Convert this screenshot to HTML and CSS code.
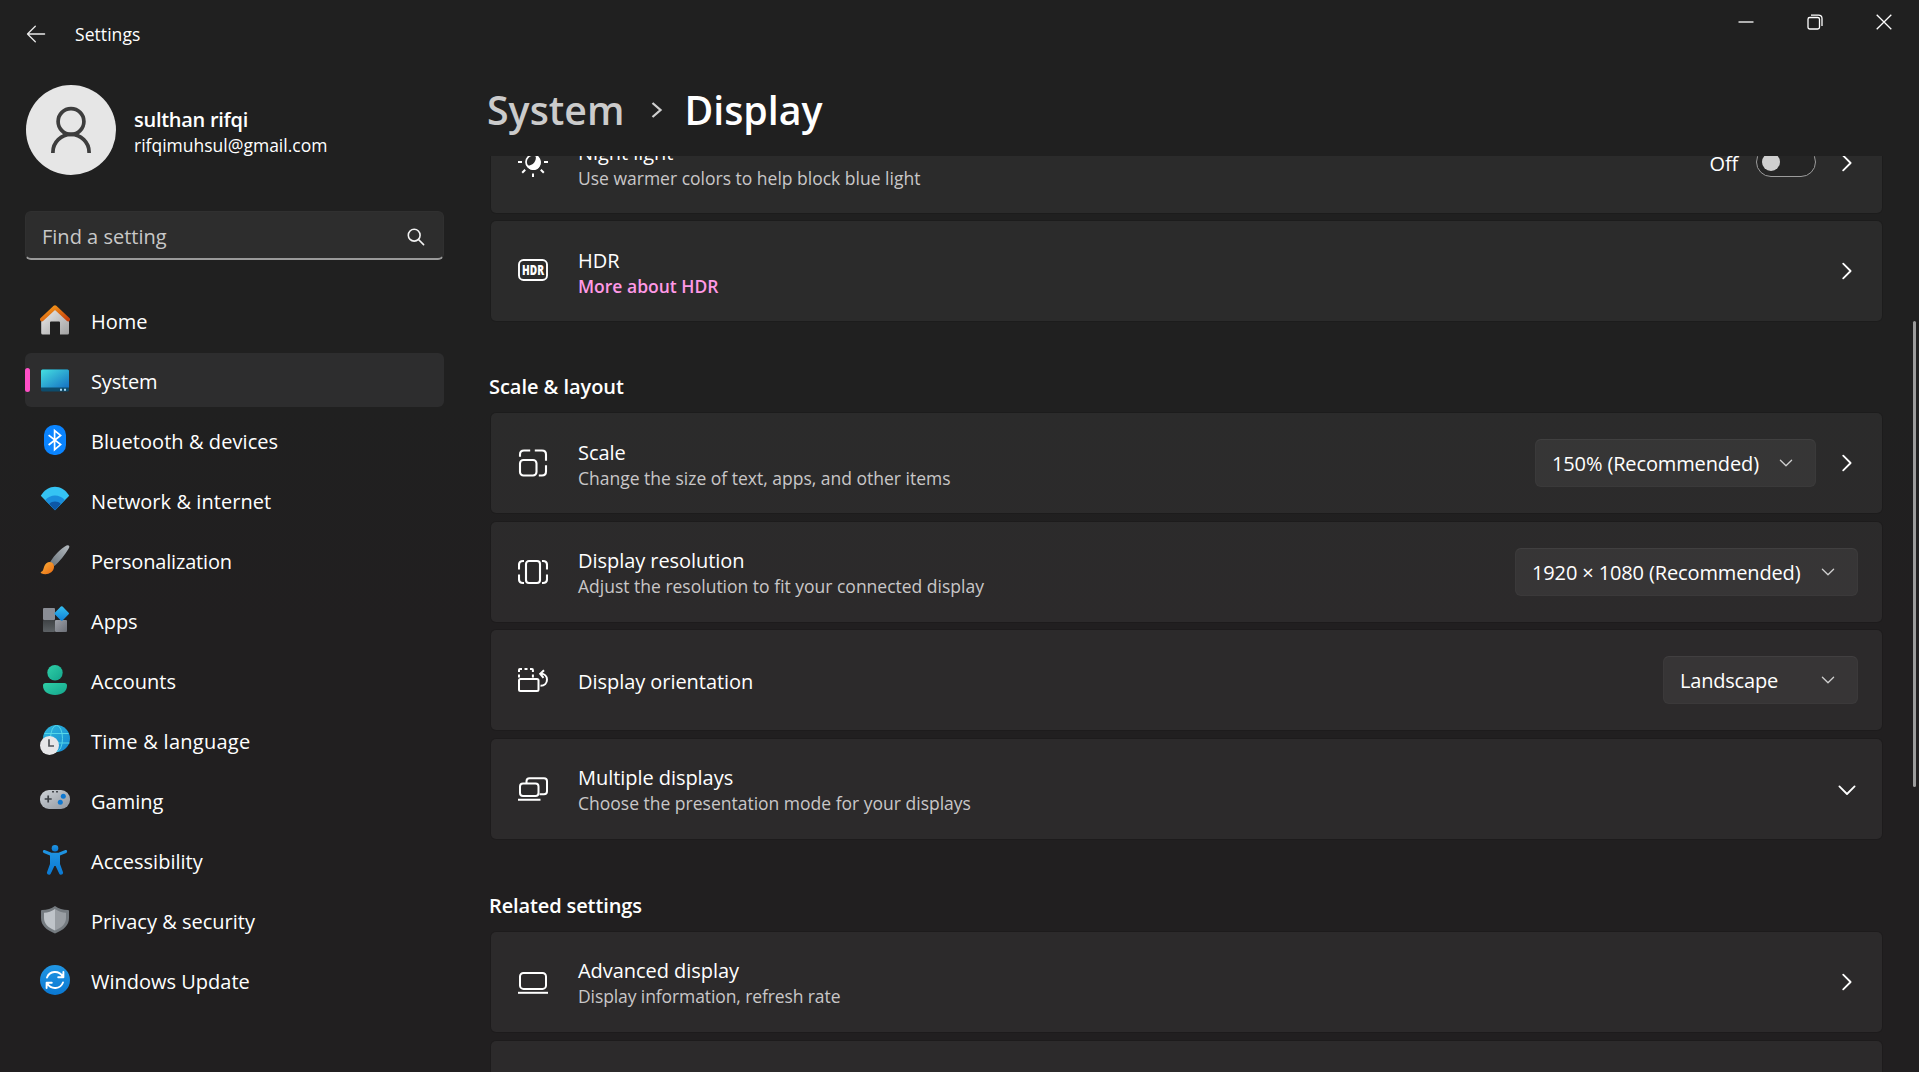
FILE: index.html
```
<!DOCTYPE html>
<html lang="en">
<head>
<meta charset="utf-8">
<title>Settings</title>
<link rel="stylesheet" href="styles.css">
</head>
<body>
<svg class="defs" width="0" height="0" aria-hidden="true">
  <defs>
    <symbol id="chev-right" viewBox="0 0 22 22"><path d="M7.2 3.6 14.6 11l-7.4 7.4" fill="none" stroke="currentColor" stroke-width="1.8" stroke-linecap="round" stroke-linejoin="round"/></symbol>
    <symbol id="chev-down" viewBox="0 0 22 22"><path d="M3.4 8.4 11 16l7.6-7.6" fill="none" stroke="currentColor" stroke-width="1.8" stroke-linecap="round" stroke-linejoin="round"/></symbol>
    <symbol id="chev-small" viewBox="0 0 14 14"><path d="M1.4 4.2 7 9.8l5.6-5.6" fill="none" stroke="currentColor" stroke-width="1.3" stroke-linecap="round" stroke-linejoin="round"/></symbol>
    <linearGradient id="g-roof" x1="0" y1="0" x2="1" y2="1"><stop offset="0" stop-color="#f9a11b"/><stop offset="1" stop-color="#c8400c"/></linearGradient>
    <linearGradient id="g-wall" x1="0" y1="0" x2="1" y2="1"><stop offset="0" stop-color="#ececec"/><stop offset="1" stop-color="#a2a2a2"/></linearGradient>
    <linearGradient id="g-screen" x1="0" y1="0" x2="1" y2="1"><stop offset="0" stop-color="#45dfe0"/><stop offset="1" stop-color="#1571c4"/></linearGradient>
    <linearGradient id="g-handle" x1="1" y1="0" x2="0" y2="1"><stop offset="0" stop-color="#b4babf"/><stop offset="1" stop-color="#69737b"/></linearGradient>
    <linearGradient id="g-brush" x1="0" y1="0" x2="1" y2="1"><stop offset="0" stop-color="#fbb13a"/><stop offset="1" stop-color="#e96a12"/></linearGradient>
    <linearGradient id="g-blue" x1="0" y1="0" x2="1" y2="1"><stop offset="0" stop-color="#35c1f1"/><stop offset="1" stop-color="#0f7fd7"/></linearGradient>
    <linearGradient id="g-globe" x1="0" y1="0" x2="1" y2="1"><stop offset="0" stop-color="#2fb9dd"/><stop offset="1" stop-color="#1487d0"/></linearGradient>
    <linearGradient id="g-deep" x1="0" y1="0" x2="0" y2="1"><stop offset="0" stop-color="#2196e3"/><stop offset="1" stop-color="#0a78d2"/></linearGradient>
    <linearGradient id="g-teal" x1="0" y1="0" x2="1" y2="1"><stop offset="0" stop-color="#2fd0a8"/><stop offset="1" stop-color="#14a58c"/></linearGradient>
    <linearGradient id="g-pad" x1="0" y1="0" x2="1" y2="1"><stop offset="0" stop-color="#cfd3d8"/><stop offset="1" stop-color="#8f959d"/></linearGradient>
    <linearGradient id="g-tile" x1="0" y1="0" x2="1" y2="1"><stop offset="0" stop-color="#9da0a8"/><stop offset="1" stop-color="#6c6f77"/></linearGradient>
    <linearGradient id="g-dark" x1="0" y1="0" x2="0" y2="1"><stop offset="0" stop-color="#3f4245"/><stop offset="1" stop-color="#5c6064"/></linearGradient>
  </defs>
</svg>

<div class="window">
  <aside class="sidebar">
    <header class="titlebar">
      <svg class="back" width="20" height="18" viewBox="0 0 20 18"><path d="M18.6 9H1.6M9.3 1.2 1.5 9l7.8 7.8" fill="none" stroke="#e8e8e8" stroke-width="1.3" stroke-linecap="round" stroke-linejoin="round"/></svg>
      <span class="caption">Settings</span>
    </header>

    <div class="account">
      <div class="avatar"><svg width="42" height="48" viewBox="0 0 42 48" fill="none" stroke="#3d3d3d" stroke-width="3.7"><circle cx="21" cy="15.5" r="12.9"/><path d="M2.9 47v-.8C2.9 36.400 11 28.400 21 28.400s18.100 8 18.100 17.800v.8"/></svg></div>
      <div class="who"><div class="name">sulthan rifqi</div><div class="mail">rifqimuhsul@gmail.com</div></div>
    </div>

    <div class="search"><span>Find a setting</span>
      <svg width="18" height="18" viewBox="0 0 18 18" fill="none" stroke="#f2f2f2" stroke-width="1.6" stroke-linecap="round"><circle cx="7.200" cy="7.200" r="5.900"/><path d="M11.500 11.500 16.600 16.600"/></svg>
    </div>

    <nav class="nav">
      <a class="item"><svg class="ico" viewBox="0 0 30 30"><path d="M15 4 1.200 16.500V28q0 1.500 1.500 1.500H10V17.500q0-1 1-1h8q1 0 1 1v12h7.500q1.500 0 1.500-1.500V16.500z" fill="url(#g-wall)"/><path d="M2 14.400 15 2.300l13 12.100" fill="none" stroke="url(#g-roof)" stroke-width="4" stroke-linecap="round" stroke-linejoin="round"/></svg><span>Home</span></a>
      <a class="item active"><svg class="ico" viewBox="0 0 30 30"><rect x="1" y="4.500" width="28" height="22" rx="1.500" fill="#0d4c6c"/><path d="M2.500 4.500h25q1.500 0 1.500 1.500v16.500H1V6q0-1.500 1.500-1.500z" fill="url(#g-screen)"/><path d="M20 23.700h2v2h-2zM24 23.700h2v2h-2z" fill="#a9d8f2"/></svg><span class="tight">System</span></a>
      <a class="item"><svg class="ico" viewBox="0 0 30 30"><rect x="4" y="0" width="22" height="30" rx="10" fill="#0a84ff"/><path d="M8.600 10.200 20.600 19.600 14.600 24.600V5.600l6 4.800L8.600 20" fill="none" stroke="#fff" stroke-width="1.700"/></svg><span class="wide">Bluetooth &amp; devices</span></a>
      <a class="item"><svg class="ico" viewBox="0 0 30 30"><path d="M.8 11.200C8-.8 22-.8 29.200 11.200L15 25.800z" transform="translate(0 -.5)" fill="#35c3f3"/><path d="M5.200 15.100C10.500 9 19.500 9 24.800 15.100L15 25.300z" fill="#1a8ddc"/><path d="M9.200 19C12.500 15.800 17.500 15.800 20.800 19L15 25.300z" fill="#0d57a6"/></svg><span class="wide">Network &amp; internet</span></a>
      <a class="item"><svg class="ico" viewBox="0 0 30 30"><path d="M10.200 17C15 9.500 21 3.500 26.500.6q2-.8 2.700.5.400 1-.5 2.500C25 10 19.500 16.500 14.500 21z" fill="url(#g-handle)"/><path d="M12.700 18.300c2.300 2.500 1.600 6.500-1.500 9-3 2.200-7.200 2.300-10 .9-.8-.5-.5-1.100.2-1.500 2-1 1.800-2.500 2.700-5 1.300-3.700 5.600-6.300 8.600-3.400z" fill="url(#g-brush)"/></svg><span class="tight">Personalization</span></a>
      <a class="item"><svg class="ico" viewBox="0 0 30 30"><rect x="3" y="3" width="12" height="12" rx="1" fill="#8a8d95"/><rect x="3" y="15" width="12" height="12" rx="1" fill="url(#g-dark)"/><rect x="15" y="15" width="12" height="12" rx="1" fill="url(#g-tile)"/><rect x="16.200" y="3" width="11" height="11" rx="1.200" transform="rotate(45 21.700 8.500)" fill="url(#g-blue)"/></svg><span>Apps</span></a>
      <a class="item"><svg class="ico" viewBox="0 0 30 30"><circle cx="15" cy="7.700" r="7.700" fill="url(#g-teal)"/><path d="M5.700 18h18.600Q27 18 27 20.500C27 26.500 22 30 15 30S3 26.500 3 20.500Q3 18 5.700 18z" fill="url(#g-teal)"/></svg><span>Accounts</span></a>
      <a class="item"><svg class="ico" viewBox="0 0 30 30"><circle cx="16.500" cy="13.500" r="13.500" fill="url(#g-globe)"/><g fill="none" stroke="#55d6e8" stroke-width="1"><ellipse cx="16.500" cy="13.500" rx="6" ry="13.200"/><path d="M4.500 8.500h24M3.500 18h26"/></g><circle cx="9.500" cy="20.500" r="9.500" fill="#e6e6e8"/><path d="M9 14.300v6.700h5" fill="none" stroke="#505358" stroke-width="1.700"/></svg><span class="wider">Time &amp; language</span></a>
      <a class="item"><svg class="ico" viewBox="0 0 30 30"><rect x="0" y="5" width="30" height="19" rx="9" fill="url(#g-pad)"/><path d="M8.200 10.500v7M4.700 14h7" stroke="#3b3f44" stroke-width="1.700"/><circle cx="23.300" cy="11.300" r="2.500" fill="#0f78d1"/><circle cx="20.300" cy="17.300" r="2.500" fill="#0f78d1"/><path d="M12 6h2v1.500h-2zM16 6h2v1.500h-2z" fill="#44474c"/></svg><span>Gaming</span></a>
      <a class="item"><svg class="ico" viewBox="0 0 30 30"><circle cx="15" cy="3.300" r="3.300" fill="url(#g-deep)"/><path d="M4.700 5 11.500 7.800h7L25.300 5c1.800-.5 2.600 2 .9 2.900L20 10.500v8.500l3 8.300c.6 2.200-2.700 3.600-3.700 1.400L15.600 21h-1.200l-3.700 7.700c-1 2.200-4.300.8-3.700-1.400l3-8.300v-8.500L3.800 7.900C2.100 7 2.900 4.500 4.700 5z" fill="url(#g-deep)"/></svg><span>Accessibility</span></a>
      <a class="item"><svg class="ico" viewBox="0 0 30 30"><path d="M15 .9c3.500 2.600 8 4 13 4.200q1 .1 1 1V13c0 7-5 12-14 15.500C6 25 1 20 1 13V6.100q0-.9 1-1C7 4.900 11.500 3.500 15 .9z" fill="#757b80"/><path d="M15 3.900c-3.300 2.300-7 3.500-11 3.900V13c0 5.500 3.700 9.500 11 12.500z" fill="#bfc4c9"/><path d="M15 3.900c3.300 2.300 7 3.500 11 3.900V13c0 5.500-3.700 9.500-11 12.500z" fill="#999ea3"/></svg><span>Privacy &amp; security</span></a>
      <a class="item"><svg class="ico" viewBox="0 0 30 30"><circle cx="15" cy="15" r="15" fill="url(#g-deep)"/><g fill="none" stroke="#fff" stroke-width="1.900" stroke-linecap="round" stroke-linejoin="round"><path d="M7 12.500C9.500 6 18.500 4.800 22.800 11.500M23.400 7v5.200h-5.200M23 17.500C20.500 24 11.500 25.200 7.200 18.500M6.600 23v-5.200h5.200"/></g></svg><span>Windows Update</span></a>
    </nav>
  </aside>

  <main class="main">
    <header class="heading">
      <div class="controls">
        <svg width="16" height="16" viewBox="0 0 16 16"><path d="M.5 8h15" stroke="#fff" stroke-width="1.300"/></svg>
        <svg width="16" height="16" viewBox="0 0 16 16" fill="none" stroke="#fff" stroke-width="1.300"><rect x="1" y="3.500" width="11.500" height="11.500" rx="1.800"/><path d="M4 1.100h7.500q3.500 0 3.500 3.500V12"/></svg>
        <svg width="16" height="16" viewBox="0 0 16 16"><path d="M.7.7l14.600 14.600M15.300.7.700 15.300" stroke="#fff" stroke-width="1.300"/></svg>
      </div>
      <h1 class="crumbs"><span class="parent">System</span>
        <svg width="14" height="18" viewBox="0 0 14 18"><path d="M2.500 2 10.500 9l-8 7" fill="none" stroke="#cfcfcf" stroke-width="2.300"/></svg>
        <span>Display</span></h1>
    </header>

    <div class="scroller">
      <section class="group first">
        <div class="card">
          <svg class="glyph" viewBox="0 0 30 30"><circle cx="15" cy="14" r="7" fill="none" stroke="#fff" stroke-width="1.700"/><path d="M17.800 8a7.200 7.200 0 1 1-8.900 9.600C15 18 18.500 13.500 17.800 8z" fill="#fff"/><path d="M15 0v3M15 25.500v3.500M0 14h4M26 14h4M4.200 24.800l3-3M25.800 24.800l-3-3M4.200 3.200l3 3M25.800 3.200l-3 3" stroke="#fff" stroke-width="2"/></svg>
          <div class="text"><div class="title">Night light</div><div class="sub">Use warmer colors to help block blue light</div></div>
          <span class="state">Off</span><span class="toggle"><i></i></span>
          <svg class="go"><use href="#chev-right"/></svg>
        </div>
        <div class="card">
          <svg class="glyph" viewBox="0 0 30 30"><rect x="1" y="4" width="28" height="20" rx="4.500" fill="none" stroke="#fff" stroke-width="1.900"/><text class="hdr" x="4" y="18.800" textLength="22" lengthAdjust="spacingAndGlyphs">HDR</text></svg>
          <div class="text"><div class="title">HDR</div><a class="sub link">More about HDR</a></div>
          <svg class="go"><use href="#chev-right"/></svg>
        </div>
      </section>

      <h2>Scale &amp; layout</h2>
      <section class="group">
        <div class="card">
          <svg class="glyph" viewBox="0 0 30 30" fill="none" stroke="#fff" stroke-width="2.100"><rect x="2" y="12" width="16.500" height="15.500" rx="3.500"/><path d="M2 8.700V6.500Q2 2.500 6 2.500h6.200M16.800 2.500H24q4 0 4 4v6.200M28 17.300v6.200q0 4-4 4h-3.200"/></svg>
          <div class="text"><div class="title">Scale</div><div class="sub">Change the size of text, apps, and other items</div></div>
          <div class="combo scale"><span>150% (Recommended)</span><svg><use href="#chev-small"/></svg></div>
          <svg class="go"><use href="#chev-right"/></svg>
        </div>
        <div class="card">
          <svg class="glyph" viewBox="0 0 30 30" fill="none" stroke="#fff" stroke-width="2.100"><rect x="8" y="4" width="14" height="22" rx="3"/><path d="M6 4H5Q1 4 1 8v4.500M1 17.500V22q0 4 4 4h1M24 4h1q4 0 4 4v4.500M29 17.500V22q0 4-4 4h-1"/></svg>
          <div class="text"><div class="title">Display resolution</div><div class="sub">Adjust the resolution to fit your connected display</div></div>
          <div class="combo resolution"><span>1920 × 1080 (Recommended)</span><svg><use href="#chev-small"/></svg></div>
        </div>
        <div class="card">
          <svg class="glyph" viewBox="0 0 30 30" fill="none" stroke="#fff" stroke-width="2"><rect x="1" y="14" width="19.500" height="12" rx="1.500"/><path d="M1 12.500v-3M1 7V5q0-.9.900-.9H4M6.500 4.100h3M12 4.100h2q.9 0 .9.900v2M14.900 9.500v3"/><path d="M22.500 20.800c4 0 6.500-2.700 6.500-6.300 0-3.300-2.500-5.700-6-5.700"/><path d="M26 5.200 22.200 8.800l3.300 4"/></svg>
          <div class="text"><div class="title single">Display orientation</div></div>
          <div class="combo landscape"><span>Landscape</span><svg><use href="#chev-small"/></svg></div>
        </div>
        <div class="card">
          <svg class="glyph" viewBox="0 0 30 30" fill="none" stroke="#fff" stroke-width="2"><rect x="2" y="9.500" width="18.500" height="12.500" rx="3"/><path d="M8.500 9V7.200q0-3 3-3H26q3 0 3 3v10q0 3-3 3h-4.500M0 25.800h22.500"/></svg>
          <div class="text"><div class="title">Multiple displays</div><div class="sub">Choose the presentation mode for your displays</div></div>
          <svg class="go"><use href="#chev-down"/></svg>
        </div>
      </section>

      <h2 class="related">Related settings</h2>
      <section class="group">
        <div class="card">
          <svg class="glyph" viewBox="0 0 30 30" fill="none" stroke="#fff" stroke-width="2"><rect x="2" y="5.900" width="26" height="16" rx="3.500"/><path d="M0 25.800h30"/></svg>
          <div class="text"><div class="title">Advanced display</div><div class="sub snug">Display information, refresh rate</div></div>
          <svg class="go"><use href="#chev-right"/></svg>
        </div>
        <div class="card"></div>
      </section>
    </div>
    <div class="scrollbar"></div>
  </main>
</div>
</body>
</html>
```
FILE: styles.css
```
* { box-sizing: border-box; }
body {
  margin: 0;
  height: 1072px;
  overflow: hidden;
  background: linear-gradient(#202020 0, #202020 38%, #211f20 58%, #211f20 100%);
  color: #fff;
  font: 400 20px/28px "Open Sans", "Noto Sans", sans-serif;
}
svg { display: block; flex: none; }
.defs { position: absolute; }
.window { display: flex; height: 1072px; }

/* Sidebar */
.sidebar { width: 444px; padding-left: 25px; flex: none; }
.titlebar { display: flex; align-items: center; height: 68px; padding-left: 1px; gap: 29px; }
.caption { font-size: 17.5px; letter-spacing: .06px; }
.account { display: flex; gap: 18px; align-items: center; height: 90px; margin-top: 17px; padding-left: 1px; }
.avatar { width: 90px; height: 90px; border-radius: 50%; background: #e6e6e6; display: flex; justify-content: center; align-items: center; }
.name { font-weight: 600; letter-spacing: -.28px; line-height: 26px; }
.mail { font-size: 17.5px; line-height: 24px; }
.who { padding-top: 3px; }
.search {
  display: flex; justify-content: space-between; align-items: center;
  height: 49px; margin-top: 36px; padding: 3px 18px 0 16px;
  background: #2d2d2d; border: 1px solid #303030; border-bottom: 2px solid #9a9a9a; border-radius: 6px;
  color: #c8c8c8;
}
.nav { display: flex; flex-direction: column; gap: 6px; margin-top: 33px; }
.item { display: flex; align-items: center; gap: 21px; height: 54px; padding-left: 15px; border-radius: 6px; }
.item span { padding-top: 4px; }
.item .tight { letter-spacing: -.17px; }
.item .wide { letter-spacing: .07px; }
.item .wider { letter-spacing: .26px; }
.item.active { background: #2d2d2e; position: relative; }
.item.active::before { content: ""; position: absolute; left: 0; top: 15px; width: 5px; height: 24px; border-radius: 3px; background: #ff4fc6; }
.ico { width: 30px; height: 30px; }

/* Content */
.main { flex: 1; position: relative; display: flex; flex-direction: column; padding-left: 44px; }
.heading { height: 156px; flex: none; }
.controls { display: flex; justify-content: flex-end; gap: 53px; height: 43px; align-items: center; padding-right: 27px; }
.crumbs { display: flex; align-items: center; margin: 41px 0 0 -1px; font-size: 39.300px; font-weight: 600; line-height: 52px; }
.crumbs svg { margin: 0 20px 0 26px; }
.crumbs .parent { color: #cbcbcb; }
.scroller { flex: 1; overflow: hidden; padding: 0 37px 0 3px; }
.group { display: flex; flex-direction: column; gap: 8.660px; }
.group.first { margin-top: -43px; gap: 8px; }
.card {
  display: flex; align-items: center; height: 100px; padding: 0 24px 0 27px;
  background: rgba(255, 255, 255, .052); border-radius: 5px; box-shadow: 0 0 0 1px rgba(0, 0, 0, .1);
}
.glyph { width: 30px; height: 30px; margin-right: 30px; }
.text { flex: 1; display: flex; flex-direction: column; padding-top: 1px; }
.title { line-height: 28px; letter-spacing: -.05px; }
.title.single { padding-top: 2px; }
.sub { font-size: 17.500px; line-height: 22px; color: #c9c7c8; }
.sub.snug { letter-spacing: -.1px; }
.link { color: #ff99e6; font-weight: 600; }
.hdr { font: 800 13.500px "Open Sans", sans-serif; fill: #fff; }
h2 { margin: 0 0 0 -2px; padding-top: 52px; height: 92px; font-size: 20px; line-height: 28px; font-weight: 600; letter-spacing: -.05px; }
h2.related { height: 93px; padding-top: 53px; letter-spacing: -.12px; }
.go { width: 22px; height: 22px; margin-left: 20px; }
.state { margin-right: 18px; letter-spacing: -.2px; padding-top: 1px; }
.toggle { width: 60px; height: 30px; margin-top: -2px; border: 1.500px solid #9c9c9c; border-radius: 15px; background: #252525; padding: 4.500px; }
.toggle i { display: block; width: 18px; height: 18px; border-radius: 50%; background: #cfcfcf; }
.combo {
  display: flex; align-items: center; justify-content: space-between;
  height: 48px; padding: 0 22px 0 16px; border-radius: 6px; white-space: nowrap;
  background: rgba(255, 255, 255, .055); border: 1px solid rgba(255, 255, 255, .025); border-top-color: rgba(255, 255, 255, .05);
}
.combo span { letter-spacing: -.13px; padding-top: 2px; }
.combo.scale { width: 281px; }
.combo.resolution { width: 343px; }
.combo.landscape { width: 195px; }
.combo.landscape span { letter-spacing: -.2px; }
.combo svg { width: 14px; height: 14px; color: #cfcfcf; }
.go use, .combo use { width: 100%; height: 100%; }
.scrollbar { position: absolute; right: 3.500px; top: 321px; width: 3px; height: 466px; border-radius: 2px; background: #9c9c9c; }
```
